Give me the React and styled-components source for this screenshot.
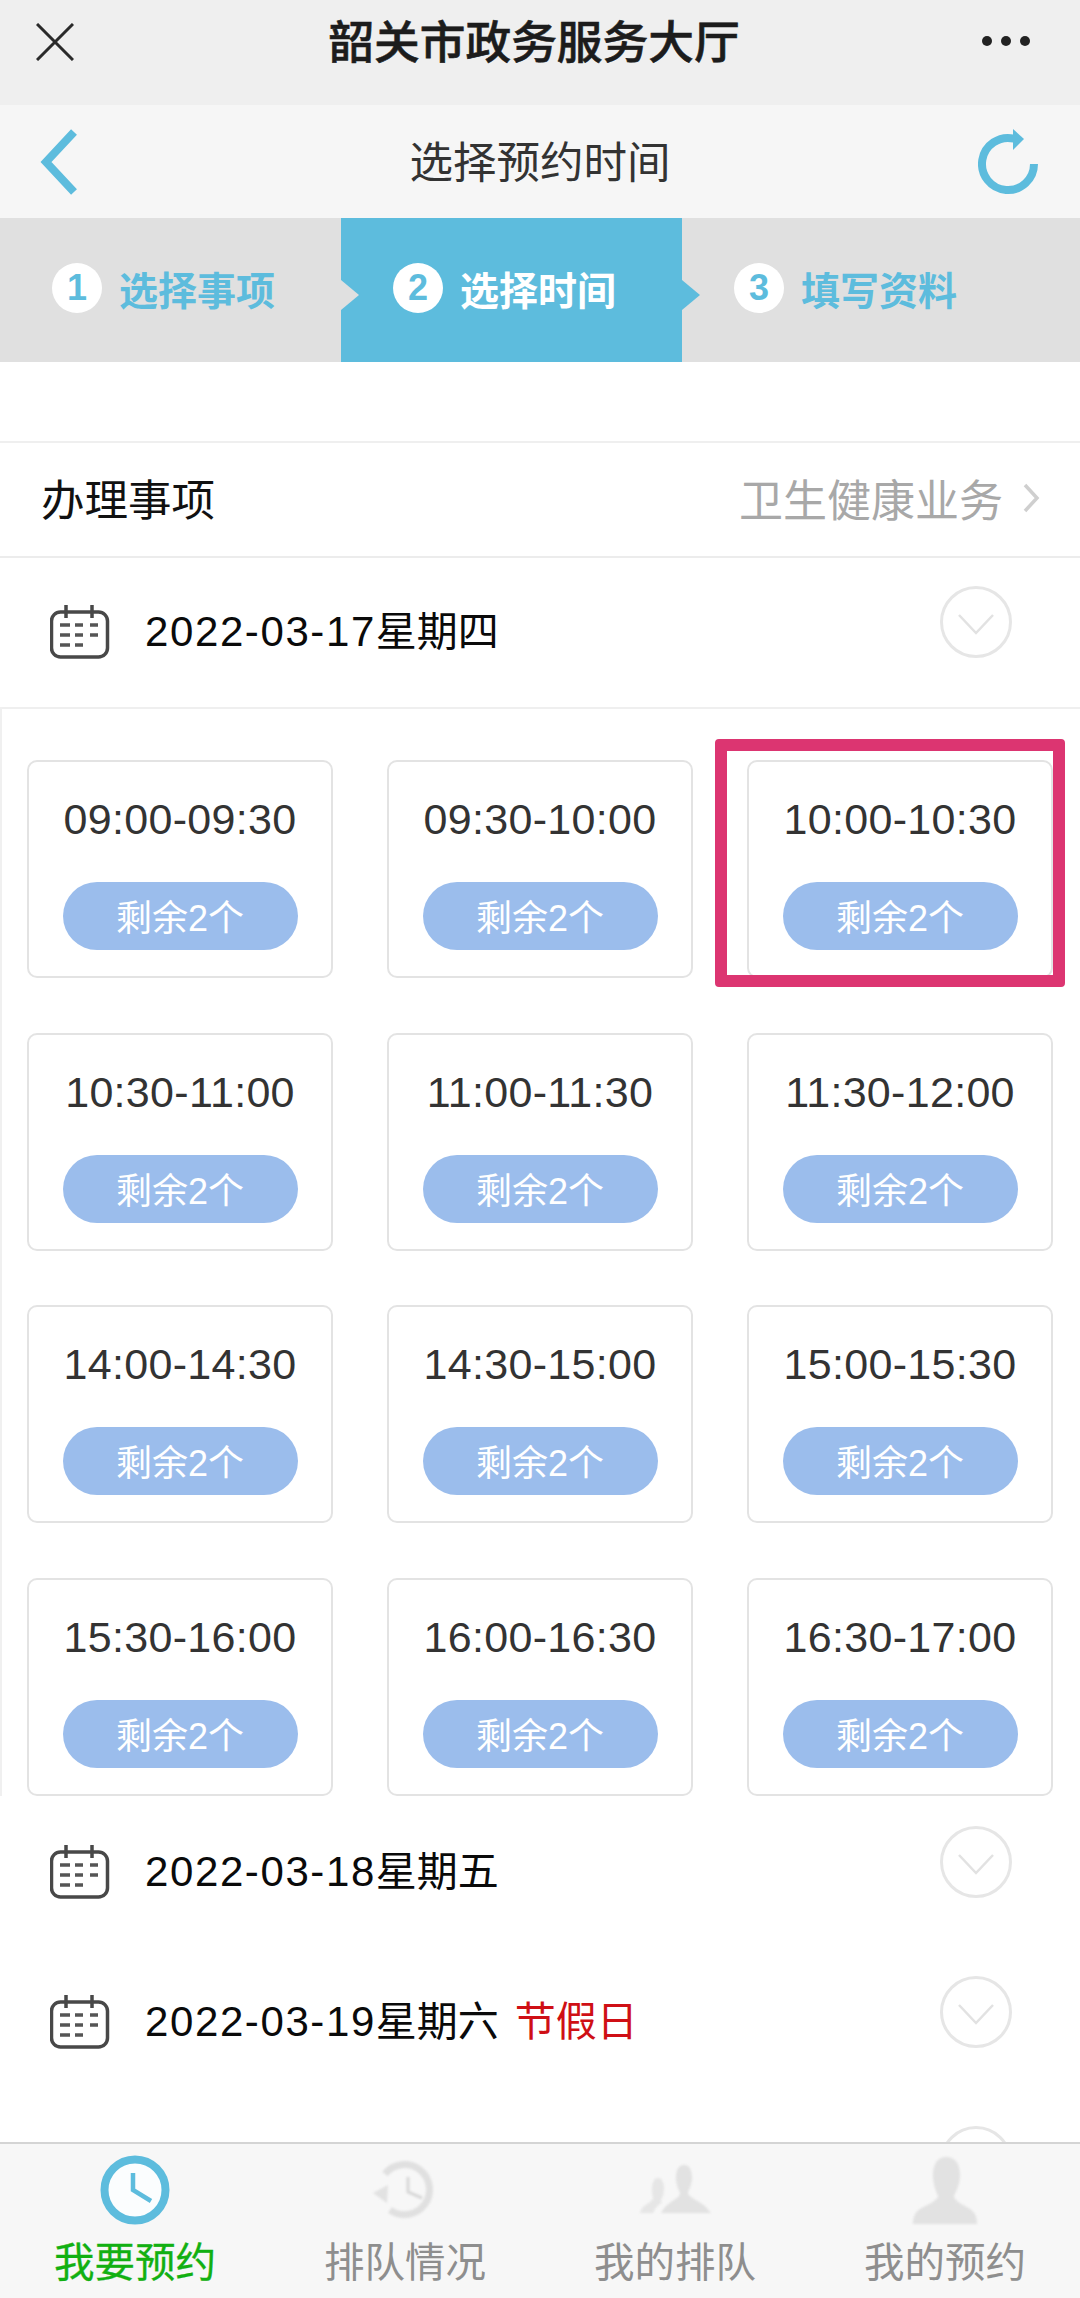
import React from 'react';
import styled, { createGlobalStyle } from 'styled-components';

const CJK = '"Liberation Sans", "Noto Sans CJK SC", sans-serif';
const BLUE = '#5dbcdd';

const slots = [
    ['09:00-09:30', '09:30-10:00', '10:00-10:30'],
    ['10:30-11:00', '11:00-11:30', '11:30-12:00'],
    ['14:00-14:30', '14:30-15:00', '15:00-15:30'],
    ['15:30-16:00', '16:00-16:30', '16:30-17:00'],
].flat();

const steps = [
    { num: 1, label: '选择事项' },
    { num: 2, label: '选择时间', active: true },
    { num: 3, label: '填写资料' },
];

const CalendarIcon = () => (
    <CalendarSvg viewBox='0 0 60 54' width='60' height='54'>
        <rect x='1.5' y='7' width='56' height='45' rx='9' fill='none' stroke='#484848' strokeWidth='3.5' />
        <path d='M16 0v13M42 0v13' stroke='#484848' strokeWidth='3.5' />
        <path d='M10 20h10M25 20h8M40 20h8M10 30h10M25 30h8M40 30h8M10 40h10M25 40h8' stroke='#555' strokeWidth='3.5' />
    </CalendarSvg>
);

const CircleChevron = () => (
    <ChevronSvg viewBox='0 0 72 72' width='72' height='72'>
        <circle cx='36' cy='36' r='34.5' fill='none' stroke='#e6e6e6' strokeWidth='3' />
        <path d='M19 29l17 18 17-18' fill='none' stroke='#e2e2e2' strokeWidth='2.5' />
    </ChevronSvg>
);

const ClockIcon = () => (
    <svg viewBox='0 0 70 70' width='70' height='70'>
        <circle cx='35' cy='35' r='30.5' fill='#fbfdfe' stroke={BLUE} strokeWidth='8' />
        <path d='M33 18v17l18 11' fill='none' stroke={BLUE} strokeWidth='4.5' />
    </svg>
);

const HistoryIcon = () => (
    <svg viewBox='0 0 70 70' width='70' height='70'>
        <path d='M15 19A25 25 0 1 1 20 55' fill='none' stroke='#e0e0e0' strokeWidth='7' />
        <path d='M3 38l15-8-1 18z' fill='#e2e2e2' />
        <path d='M38 22v15l14 6' fill='none' stroke='#d8d8d8' strokeWidth='3' />
    </svg>
);

const PeopleIcon = () => (
    <svg viewBox='0 0 72 70' width='72' height='70'>
        <path d='M45 10C51 10 53 16 53 23C53 29 50 34 49 38C49 42 60 46 66 51L72 58H22C25 52 30 48 35 45C38 43 41 41 41 38C39 34 37 29 37 23C37 16 39 10 45 10z' fill='#e2e2e2' />
        <path d='M19 23C23 23 25 28 25 33C25 38 24 42 22 45C22 47 23 48 23 48C18 50 16 54 14 58H1C2 52 7 50 11 47C13 45 14 44 14 43C13 40 13 36 13 33C13 28 15 23 19 23z' fill='#e6e6e6' />
    </svg>
);

const PersonIcon = () => (
    <svg viewBox='0 0 70 70' width='70' height='70'>
        <path d='M36 2C46 2 50 10 50 20C50 30 46 36 44 41C44 46 54 50 60 54C65 57 67 62 67 69H3C3 62 5 57 10 54C16 50 28 46 28 41C26 36 23 30 23 20C23 10 27 2 36 2z' fill='#e2e2e2' />
    </svg>
);

const tabs = [
    { label: '我要预约', Icon: ClockIcon, active: true },
    { label: '排队情况', Icon: HistoryIcon },
    { label: '我的排队', Icon: PeopleIcon },
    { label: '我的预约', Icon: PersonIcon },
];

const DateRow = ({ date, weekday, note, divider }) => (
    <DateLine $divider={divider}>
        <CalendarIcon />
        <DateText>
            <DateNum>{date}</DateNum>
            {weekday}
            {note && <Holiday>{note}</Holiday>}
        </DateText>
        <CircleChevron />
    </DateLine>
);

const App = () => {
    return (
        <Page>
            <GlobalStyle />
            <TopBar>
                <svg viewBox='0 0 38 38' width='38' height='38'>
                    <path d='M1 1l36 36M37 1L1 37' stroke='#2a2a2a' strokeWidth='3' />
                </svg>
                <TopTitle>韶关市政务服务大厅</TopTitle>
                <Dots>
                    <i />
                    <i />
                    <i />
                </Dots>
            </TopBar>

            <Header>
                <svg viewBox='0 0 38 66' width='38' height='66'>
                    <path d='M34 3L6 33l28 30' fill='none' stroke={BLUE} strokeWidth='8' />
                </svg>
                <HeaderTitle>选择预约时间</HeaderTitle>
                <svg viewBox='0 0 60 66' width='60' height='66'>
                    <path d='M56 35A26 26 0 1 1 36 9.7' fill='none' stroke={BLUE} strokeWidth='8' />
                    <path d='M35 0l11 10-11 11z' fill={BLUE} />
                </svg>
            </Header>

            <Steps>
                {steps.map((step) => (
                    <Step key={step.num} $active={step.active}>
                        <StepNum>{step.num}</StepNum>
                        <StepLabel $active={step.active}>{step.label}</StepLabel>
                    </Step>
                ))}
            </Steps>

            <Spacer />

            <ItemRow>
                <ItemLabel>办理事项</ItemLabel>
                <ItemValue>
                    卫生健康业务
                    <svg viewBox='0 0 18 30' width='18' height='30'>
                        <path d='M3 2l12 13L3 28' fill='none' stroke='#cfcfcf' strokeWidth='3.5' />
                    </svg>
                </ItemValue>
            </ItemRow>

            <Main>
                <DateRow date='2022-03-17' weekday='星期四' divider />

                <SlotGrid>
                    {slots.map((slot) => (
                        <SlotCard key={slot} $picked={slot === '10:00-10:30'}>
                            <SlotTime>{slot}</SlotTime>
                            <Remain>剩余2个</Remain>
                        </SlotCard>
                    ))}
                </SlotGrid>

                <DateRow date='2022-03-18' weekday='星期五' />
                <DateRow date='2022-03-19' weekday='星期六' note='节假日' />
                {/* only the top of the next row's circle shows above the tab bar */}
                <DateLine>
                    <CircleChevron />
                </DateLine>
            </Main>

            <TabBar>
                {tabs.map(({ label, Icon, active }) => (
                    <Tab key={label}>
                        <TabIcon $active={active}>
                            <Icon />
                        </TabIcon>
                        <TabLabel $active={active}>{label}</TabLabel>
                    </Tab>
                ))}
            </TabBar>
        </Page>
    );
};

const GlobalStyle = createGlobalStyle`
    html, body {
        margin: 0;
        padding: 0;
        background: #fff;
    }

    *, *::before, *::after {
        box-sizing: border-box;
    }
`;

const Page = styled.div`
    width: 1080px;
    height: 2298px;
    display: flex;
    flex-direction: column;
    overflow: hidden;
    font-family: ${CJK};
    background: #fff;
`;

const TopBar = styled.div`
    height: 105px;
    flex: none;
    display: flex;
    align-items: flex-start;
    justify-content: space-between;
    padding: 23px 50px 0 36px;
    background: #efefef;
`;

const TopTitle = styled.div`
    margin-left: 12px;
    font-size: 45.7px;
    line-height: 42px;
    font-weight: 500;
    color: #1c1c1c;
    -webkit-text-stroke: 0.6px #1c1c1c;
`;

const Dots = styled.div`
    display: flex;
    gap: 9px;
    padding-top: 13px;

    i {
        width: 10px;
        height: 10px;
        border-radius: 50%;
        background: #222;
    }
`;

const Header = styled.div`
    height: 113px;
    flex: none;
    display: flex;
    align-items: center;
    justify-content: space-between;
    padding: 0 42px 0 40px;
    background: #f6f6f6;
`;

const HeaderTitle = styled.div`
    font-size: 43.5px;
    color: #333;
    margin: 0 0 5px 24px;
`;

const Steps = styled.div`
    height: 144px;
    flex: none;
    display: grid;
    grid-template-columns: 341px 341px 1fr;
    background: #e0e0e0;
`;

const Step = styled.div`
    position: relative;
    display: flex;
    align-items: center;
    gap: 17px;
    padding: 0 0 5px 52px;
    background: ${(p) => (p.$active ? BLUE : 'transparent')};

    ${(p) =>
        p.$active &&
        `
        &::before, &::after {
            content: '';
            position: absolute;
            top: 62px;
            border-style: solid;
            border-width: 15px 0 15px 18px;
            border-color: transparent;
        }
        &::before {
            left: 0;
            border-left-color: #e0e0e0;
        }
        &::after {
            left: 100%;
            border-left-color: ${BLUE};
        }
    `}
`;

const StepNum = styled.span`
    width: 50px;
    height: 50px;
    flex: none;
    display: flex;
    align-items: center;
    justify-content: center;
    border-radius: 50%;
    background: #fff;
    color: ${BLUE};
    font-size: 36px;
    font-weight: 700;
`;

const StepLabel = styled.span`
    font-size: 39px;
    font-weight: 700;
    color: ${(p) => (p.$active ? '#fff' : BLUE)};
`;

const Spacer = styled.div`
    height: 79px;
    flex: none;
    box-shadow: 0 2px 0 #efefef;
`;

const ItemRow = styled.div`
    height: 115px;
    flex: none;
    display: flex;
    align-items: center;
    justify-content: space-between;
    padding: 0 40px 2px 41px;
    box-shadow: 0 2px 0 #ececec;
`;

const ItemLabel = styled.div`
    font-size: 43.5px;
    color: #111;
`;

const ItemValue = styled.div`
    display: flex;
    align-items: center;
    gap: 19px;
    font-size: 44px;
    color: #a8a8a8;
`;

const Main = styled.div`
    flex: 1;
    min-height: 0;
    overflow: hidden;
`;

const DateLine = styled.div`
    height: ${(p) => (p.$divider ? '151px' : '150px')};
    display: flex;
    align-items: flex-start;
    padding: 30px 68px 0 50px;
    box-shadow: ${(p) => (p.$divider ? '0 2px 0 #efefef' : 'none')};
`;

const CalendarSvg = styled.svg`
    flex: none;
    margin-top: 19px;
`;

const ChevronSvg = styled.svg`
    flex: none;
    margin-left: auto;
`;

const DateText = styled.div`
    margin: 23px 0 0 35px;
    font-size: 41px;
    line-height: 46px;
    color: #0a0a0a;
`;

const DateNum = styled.span`
    font-size: 42px;
    letter-spacing: 1.6px;
`;

const Holiday = styled.span`
    margin-left: 16px;
    color: #cf0f15;
`;

const SlotGrid = styled.div`
    display: grid;
    grid-template-columns: repeat(3, 1fr);
    grid-auto-rows: 218px;
    column-gap: 54px;
    row-gap: 54.5px;
    padding: 53px 27px 0 25px;
    border-left: 2px solid #f0f0f0;
`;

const SlotCard = styled.div`
    position: relative;
    display: flex;
    flex-direction: column;
    align-items: center;
    padding-top: 32px;
    border: 2px solid #e3e3e3;
    border-radius: 10px;
    background: #fff;

    ${(p) =>
        p.$picked &&
        `
        &::after {
            content: '';
            position: absolute;
            left: -34px;
            top: -23px;
            width: 350px;
            height: 248px;
            border: 12px solid #dc3571;
            border-radius: 4px;
        }
    `}
`;

const SlotTime = styled.div`
    font-size: 43px;
    line-height: 50px;
    letter-spacing: 0.3px;
    color: #333;
`;

const Remain = styled.div`
    width: 235px;
    height: 68px;
    margin-top: 38px;
    padding-bottom: 2px;
    display: flex;
    align-items: center;
    justify-content: center;
    border-radius: 34px;
    background: #9bbdec;
    color: #fff;
    font-size: 36px;
`;

const TabBar = styled.div`
    height: 156px;
    flex: none;
    display: grid;
    grid-template-columns: repeat(4, 1fr);
    background: #f7f7f7;
    border-top: 2px solid #d4d4d4;
`;

const Tab = styled.div`
    display: flex;
    flex-direction: column;
    align-items: center;
    padding-top: 11px;
`;

const TabIcon = styled.div`
    height: 70px;
    display: flex;
    filter: ${(p) => (p.$active ? 'none' : 'blur(1.2px)')};
`;

const TabLabel = styled.div`
    margin-top: 15px;
    font-size: 40.5px;
    line-height: 46px;
    color: ${(p) => (p.$active ? '#12b012' : '#8e8e8e')};
    -webkit-text-stroke: ${(p) => (p.$active ? '0.3px #12b012' : '0')};
`;

export default App;
